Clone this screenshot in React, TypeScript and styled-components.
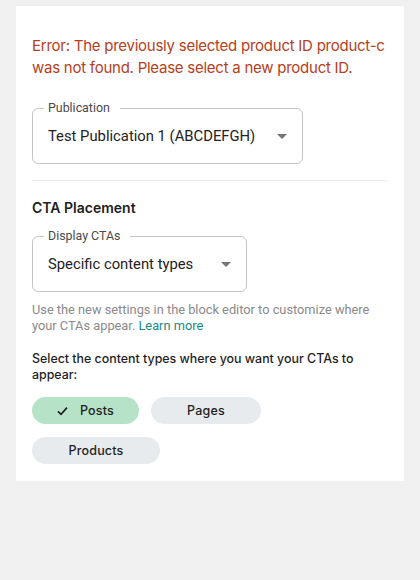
import styled, { createGlobalStyle } from 'styled-components';

const GlobalStyle = createGlobalStyle`
  html, body {
    margin: 0;
    background: #f0f0f0;
  }
  body {
    padding: 6px 16px 0;
    font-family: Inter, "Noto Sans", sans-serif;
  }
`;

const Card = styled.div`
  background: #fff;
  padding: 29px 16px 17px;
  display: flex;
  flex-direction: column;
`;

const ErrorText = styled.p`
  margin: 0 -2px 30px 0;
  color: #b5401c;
  font-size: 15px;
  line-height: 21.5px;
  letter-spacing: -0.25px;
`;

const Field = styled.div<{ $width: number }>`
  position: relative;
  width: ${(p) => p.$width}px;
  height: 56px;
  box-sizing: border-box;
  border: 1px solid #c4c4c4;
  border-radius: 6px;
  display: flex;
  align-items: center;
  padding: 0 15px 0 15px;
  font-family: Roboto, "Liberation Sans", sans-serif;
`;

const FieldLabel = styled.span`
  position: absolute;
  top: -9px;
  left: 11px;
  padding: 0 10px 0 4px;
  background: #fff;
  font-size: 12.4px;
  line-height: 16px;
  color: #4a4a4a;
`;

const FieldValue = styled.span`
  flex: 1;
  font-size: 14.8px;
  color: #222;
  white-space: nowrap;
`;

const Caret = styled.span`
  width: 0;
  height: 0;
  border-left: 5px solid transparent;
  border-right: 5px solid transparent;
  border-top: 5px solid #757575;
`;

const Divider = styled.hr`
  border: 0;
  border-top: 1px solid #ececec;
  margin: 16px 0 17px;
`;

const SectionTitle = styled.h3`
  margin: 0 0 18px;
  font-size: 14px;
  font-weight: 600;
  color: #1e1e1e;
  line-height: 20px;
`;

const Help = styled.p`
  margin: 10px 0 17px;
  font-family: Roboto, "Liberation Sans", sans-serif;
  font-size: 12.8px;
  line-height: 16px;
  color: #8a8a8a;

  a {
    color: #1a8c80;
    text-decoration: none;
  }
`;

const Prompt = styled.p`
  margin: 0 0 14px;
  font-size: 12.4px;
  line-height: 16px;
  font-weight: 500;
  color: #1e1e1e;
`;

const Chips = styled.div`
  display: flex;
  flex-wrap: wrap;
  gap: 13px 12px;
  width: 240px;
`;

const Chip = styled.button<{ $selected?: boolean; $width: number }>`
  width: ${(p) => p.$width}px;
  height: 27px;
  border: 0;
  border-radius: 14px;
  background: ${(p) => (p.$selected ? '#b6e3c8' : '#e8ebee')};
  font-family: Inter, "Noto Sans", sans-serif;
  font-size: 12.5px;
  font-weight: 500;
  color: #1e1e1e;
  display: flex;
  align-items: center;
  justify-content: center;
  gap: 12px;
  padding: 0;
  letter-spacing: 0.2px;
`;

const Check = () => (
  <svg width="11" height="10" viewBox="0 0 11 10" fill="none">
    <path d="M1 5.4 L4 8.4 L10 1.6" stroke="#1e1e1e" strokeWidth="1.6" />
  </svg>
);

export default function App() {
  return (
    <>
      <GlobalStyle />
      <Card>
        <ErrorText>
          Error: The previously selected product ID product-c was not found. Please select a new product ID.
        </ErrorText>
        <Field $width={271}>
          <FieldLabel>Publication</FieldLabel>
          <FieldValue>Test Publication 1 (ABCDEFGH)</FieldValue>
          <Caret />
        </Field>
        <Divider />
        <SectionTitle>CTA Placement</SectionTitle>
        <Field $width={215}>
          <FieldLabel>Display CTAs</FieldLabel>
          <FieldValue>Specific content types</FieldValue>
          <Caret />
        </Field>
        <Help>
          Use the new settings in the block editor to customize where your CTAs appear.{' '}
          <a href="#">Learn more</a>
        </Help>
        <Prompt>Select the content types where you want your CTAs to appear:</Prompt>
        <Chips>
          <Chip $selected $width={107}>
            <Check />
            Posts
          </Chip>
          <Chip $width={110}>Pages</Chip>
          <Chip $width={128}>Products</Chip>
        </Chips>
      </Card>
    </>
  );
}
